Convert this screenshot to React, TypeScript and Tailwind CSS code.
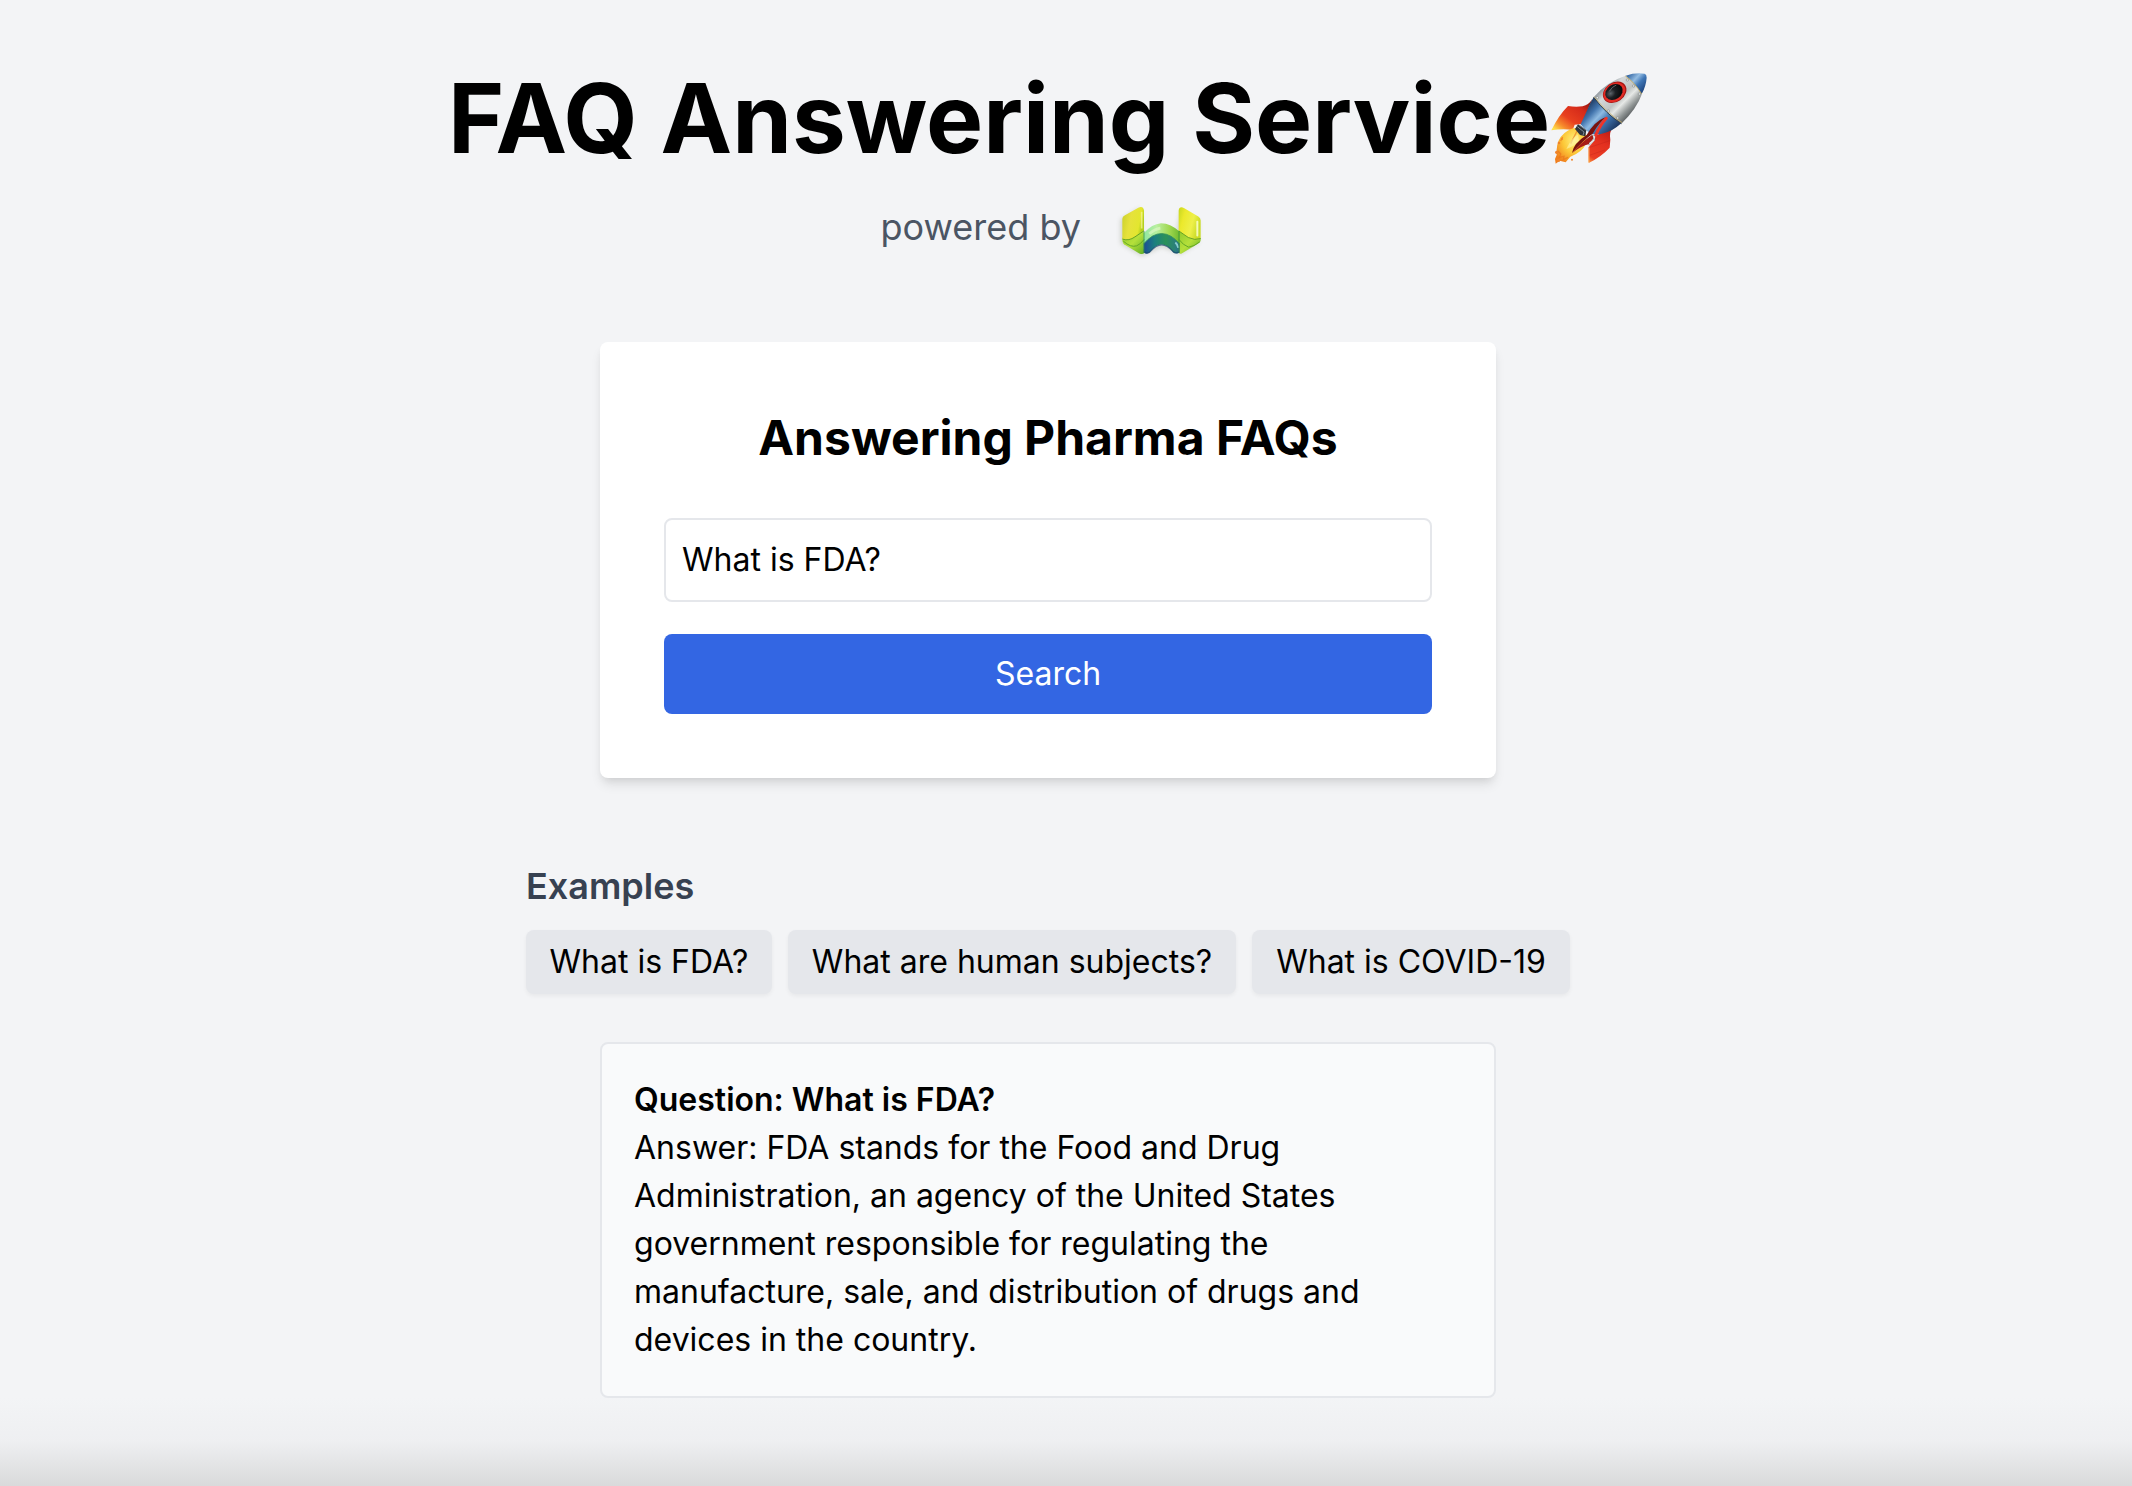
import React, { useState } from "react";

function Rocket() {
  return (
    <svg viewBox="30 30 294 288" className="h-24 w-[98px] shrink-0" aria-hidden="true">
      <defs>
        <linearGradient id="hull" gradientUnits="userSpaceOnUse" x1="185" y1="75" x2="280" y2="170">
          <stop offset="0" stopColor="#77808a" />
          <stop offset="0.22" stopColor="#d4d8d9" />
          <stop offset="0.5" stopColor="#c0c4c3" />
          <stop offset="0.62" stopColor="#e6e8e6" />
          <stop offset="0.8" stopColor="#8f9494" />
          <stop offset="1" stopColor="#404447" />
        </linearGradient>
        <linearGradient id="steel" gradientUnits="userSpaceOnUse" x1="135" y1="140" x2="215" y2="215">
          <stop offset="0" stopColor="#1f3a60" />
          <stop offset="0.25" stopColor="#4173ac" />
          <stop offset="0.45" stopColor="#8fbbe2" />
          <stop offset="0.65" stopColor="#4379b5" />
          <stop offset="1" stopColor="#1e3b66" />
        </linearGradient>
        <linearGradient id="nose" gradientUnits="userSpaceOnUse" x1="270" y1="40" x2="320" y2="85">
          <stop offset="0" stopColor="#386aa6" />
          <stop offset="0.35" stopColor="#93bce2" />
          <stop offset="0.6" stopColor="#3f76b6" />
          <stop offset="1" stopColor="#1c417a" />
        </linearGradient>
        <linearGradient id="finLeft" gradientUnits="userSpaceOnUse" x1="140" y1="120" x2="62" y2="222">
          <stop offset="0" stopColor="#8e130d" />
          <stop offset="0.25" stopColor="#d52a1a" />
          <stop offset="0.6" stopColor="#e8401f" />
          <stop offset="0.82" stopColor="#f78a2c" />
          <stop offset="1" stopColor="#ffe04a" />
        </linearGradient>
        <linearGradient id="finRight" gradientUnits="userSpaceOnUse" x1="205" y1="205" x2="150" y2="308">
          <stop offset="0" stopColor="#bb1c14" />
          <stop offset="0.4" stopColor="#e3301f" />
          <stop offset="0.85" stopColor="#ea3e25" />
          <stop offset="1" stopColor="#f9903a" />
        </linearGradient>
        <radialGradient id="flame" cx="0.6" cy="0.35" r="0.7">
          <stop offset="0" stopColor="#fff07a" />
          <stop offset="0.5" stopColor="#fcc838" />
          <stop offset="1" stopColor="#f07f1c" />
        </radialGradient>
        <radialGradient id="glass" cx="0.3" cy="0.45" r="0.7">
          <stop offset="0" stopColor="#5e656b" />
          <stop offset="0.4" stopColor="#1c2024" />
          <stop offset="1" stopColor="#050607" />
        </radialGradient>
      </defs>
      <path d="M157 117 Q146 135 128 139 Q106 142 84 138 Q56 166 34 211 Q70 205 98 210 L104 194 L126 192 Z" fill="url(#finLeft)" />
      <path d="M217 205 Q207 217 211 239 L209 263 Q184 290 146 309 L146 262 L163 242 L166 227 Z" fill="url(#finRight)" />
      <path d="M146 263 L210 242 M148 286 L194 270" stroke="#b5201a" strokeWidth="1.5" opacity="0.6" />
      <path d="M147 262 L147 307" stroke="#fba64a" strokeWidth="3" />
      <path d="M111 203 Q82 205 62 231 Q48 251 50 285 L45 297 L47 311 L59 302 L77 307 L91 290 Q126 278 139 250 L140 226 Z" fill="url(#flame)" />
      <path d="M54 273 L62 282 L58 292 L72 289 L70 299 L84 292 M68 231 L62 243 M111 213 L92 251" stroke="#e8701b" strokeWidth="4" fill="none" opacity="0.6" />
      <path d="M114 223 Q92 238 79 267 Q101 260 117 243" fill="#fff6ad" opacity="0.6" />
      <g fill="#f0832a">
        <circle cx="57" cy="249" r="4" />
        <circle cx="66" cy="237" r="3" />
        <circle cx="96" cy="299" r="3" />
        <circle cx="50" cy="277" r="5" />
        <circle cx="56" cy="301" r="5" />
      </g>
      <path d="M161 112 Q150 129 144 145 L122 193 Q143 222 168 224 Q190 223 215 211 Q232 201 244 190 Z" fill="url(#steel)" />
      <path d="M161 112 Q198 66 257 47 Q284 67 306 101 Q291 145 244 191 Q202 163 161 112 Z" fill="url(#hull)" />
      <path d="M257 47 Q286 37 314 41 Q320 43 320 53 Q318 79 305 102 Q286 70 257 47 Z" fill="url(#nose)" />
      <path d="M256 48 Q285 68 305 102" stroke="#c7aa55" strokeWidth="2.5" fill="none" />
      <path d="M161 112 Q199 162 244 191" stroke="#33404c" strokeWidth="3" fill="none" />
      <path d="M163 110 Q201 159 246 188" stroke="#cfb45c" strokeWidth="2" fill="none" />
      <g fill="#e9eceb" stroke="#6e7476" strokeWidth="1.5">
        <circle cx="172" cy="113" r="3.5" />
        <circle cx="205" cy="153" r="3.5" />
        <circle cx="233" cy="174" r="3.5" />
        <circle cx="262" cy="60" r="3.5" />
        <circle cx="281" cy="78" r="3.5" />
        <circle cx="298" cy="102" r="3.5" />
      </g>
      <ellipse cx="224" cy="97" rx="38" ry="29" transform="rotate(-35 224 97)" fill="#a61614" />
      <ellipse cx="223" cy="97" rx="35" ry="27" transform="rotate(-35 223 97)" fill="#e32b24" />
      <ellipse cx="222" cy="96" rx="28" ry="22" transform="rotate(-35 222 96)" fill="url(#glass)" />
      <path d="M208 94 Q216 80 229 75" stroke="#8d969b" strokeWidth="3" fill="none" opacity="0.6" />
      <path d="M114 193 L139 210 L136 229 L120 225 L105 207 Z" fill="#2e353c" />
      <path d="M112 200 L132 216 L129 226 M119 196 L138 210" stroke="#7d8993" strokeWidth="3" fill="none" />
      <path d="M199 172 Q179 185 158 221 Q126 244 96 279 Q101 249 140 225 Q163 185 191 174 Z" fill="#7a120d" />
      <path d="M199 175 Q181 194 167 226" stroke="#ee3528" strokeWidth="9" fill="none" strokeLinecap="round" />
      <path d="M96 280 Q119 250 157 224 L161 234 L148 252 Q123 257 96 280 Z" fill="#a81d14" />
      <path d="M147 256 L163 242 L166 230 L158 224 L161 238 L147 249 Z" fill="#f8f9fa" stroke="#4a4f54" strokeWidth="1" />
    </svg>
  );
}

function Logo() {
  return (
    <svg viewBox="50 30 270 170" className="mt-[3px] h-[57px] w-[90px] shrink-0 overflow-visible" aria-hidden="true">
      <defs>
        <linearGradient id="wingLeft" x1="0" y1="0" x2="1" y2="0.3">
          <stop offset="0" stopColor="#c9cf2a" />
          <stop offset="0.45" stopColor="#e6e23c" />
          <stop offset="0.85" stopColor="#e3e62f" />
          <stop offset="1" stopColor="#b4cf1e" />
        </linearGradient>
        <linearGradient id="wingRight" x1="0" y1="0" x2="1" y2="0.4">
          <stop offset="0" stopColor="#c5d620" />
          <stop offset="0.3" stopColor="#ece92c" />
          <stop offset="0.7" stopColor="#eef04a" />
          <stop offset="1" stopColor="#cbdc28" />
        </linearGradient>
        <linearGradient id="leaf" x1="0" y1="0" x2="1" y2="1">
          <stop offset="0" stopColor="#8fc92b" />
          <stop offset="0.5" stopColor="#b5e03b" />
          <stop offset="1" stopColor="#5fae25" />
        </linearGradient>
        <linearGradient id="archTop" gradientUnits="userSpaceOnUse" x1="130" y1="130" x2="240" y2="130">
          <stop offset="0" stopColor="#8fe6a0" />
          <stop offset="0.35" stopColor="#b9efa0" />
          <stop offset="0.7" stopColor="#a0d850" />
          <stop offset="1" stopColor="#6cb82c" />
        </linearGradient>
        <linearGradient id="archLow" gradientUnits="userSpaceOnUse" x1="130" y1="160" x2="240" y2="160">
          <stop offset="0" stopColor="#1c4a96" />
          <stop offset="0.3" stopColor="#1c7f80" />
          <stop offset="0.6" stopColor="#2a9159" />
          <stop offset="0.85" stopColor="#2a8079" />
          <stop offset="1" stopColor="#276a8e" />
        </linearGradient>
        <filter id="soft" x="-20%" y="-20%" width="140%" height="150%">
          <feGaussianBlur stdDeviation="7" />
        </filter>
        <filter id="edge" x="-50%" y="-50%" width="200%" height="200%" filterUnits="objectBoundingBox">
          <feGaussianBlur stdDeviation="2" />
        </filter>
      </defs>
      <path d="M60 84 L118 50 L128 130 L184 110 L228 120 L240 60 L296 90 L294 156 L240 190 L184 168 L125 196 L60 158 Z" fill="#8a917c" opacity="0.3" filter="url(#soft)" />
      <path d="M66 140 L125 118 L131 125 L132 185 Q128 191 117 187 L72 160 Q65 154 66 140 Z" fill="url(#leaf)" />
      <path d="M236 118 L301 141 Q303 151 294 157 L244 187 Q235 190 235 181 Z" fill="url(#leaf)" />
      <path d="M130 126 Q155 98 182 96 Q212 96 238 122 L238 175 Q184 120 130 175 Z" fill="url(#archTop)" />
      <path d="M130 158 Q156 127 184 127 Q213 128 238 158 L238 184 Q230 190 219 184 Q184 136 148 184 Q137 191 130 184 Z" fill="url(#archLow)" />
      <path d="M130 158 Q156 127 184 127 Q213 128 238 158" stroke="#35915a" strokeWidth="2.5" fill="none" />
      <path d="M133 183 Q145 189 151 180 Q184 142 217 180 Q226 189 236 182" stroke="#1b4471" strokeWidth="4" fill="none" opacity="0.7" />
      <path d="M225 154 Q232 160 234 170" stroke="#87cbd0" strokeWidth="6" fill="none" />
      <path d="M66 83 Q66 76 74 72 L114 50 Q128 43 131 58 L131 119 L103 138 Q84 150 66 143 Z" fill="url(#wingLeft)" />
      <path d="M235 58 Q237 43 252 51 L294 76 Q301 80 301 88 L301 142 Q283 150 260 137 L235 119 Z" fill="url(#wingRight)" />
      <path d="M67 144 Q86 150 104 137 L131 119 M235 119 Q252 131 264 139 Q284 149 301 142" stroke="#69a325" strokeWidth="3" fill="none" />
      <path d="M69 150 Q91 170 109 164 Q121 159 131 145 M236 145 Q248 162 265 168 Q281 166 298 152" stroke="#65a827" strokeWidth="3" fill="none" />
      <path d="M131 120 L131 185 M236 120 L236 185" stroke="#328f3e" strokeWidth="3" opacity="0.75" />
      <path d="M124 62 L124 112" stroke="#f9f99a" strokeWidth="5" opacity="0.7" />
      <path d="M291 92 L291 133" stroke="#fbffd0" strokeWidth="6" strokeLinecap="round" opacity="0.85" />
      <path d="M147 128 Q163 114 180 111" stroke="#ddf8c4" strokeWidth="8" fill="none" opacity="0.7" filter="url(#edge)" />
    </svg>
  );
}

const examples = [
  { text: "What is FDA?", width: "w-[246px]" },
  { text: "What are human subjects?", width: "w-[448px]" },
  { text: "What is COVID-19", width: "w-[318px]" },
];

export default function App() {
  const [query, setQuery] = useState("What is FDA?");

  return (
    <div className="flex h-[1486px] flex-col items-center overflow-hidden bg-[#f3f4f6] font-['Inter',sans-serif] text-[32px] leading-[48px] text-black">
      <div className="flex w-full flex-col items-center pt-[70px] pr-9">
        <h1 className="flex h-24 items-start text-8xl leading-none font-bold whitespace-nowrap">
          <span>FAQ Answering Service</span>
          <Rocket />
        </h1>

        <div className="mt-8 flex h-14 w-[335px] items-start justify-between pr-[9px] text-4xl leading-[58px] text-[#4b5563]">
          <span className="whitespace-nowrap">powered by</span>
          <Logo />
        </div>

        <form
          className="mt-[88px] flex w-4xl flex-col rounded-lg bg-white p-16 shadow-[0_8px_12px_-2px_rgba(0,0,0,0.1),0_4px_8px_-4px_rgba(0,0,0,0.1)]"
          onSubmit={(e) => e.preventDefault()}
        >
          <h2 className="text-center text-5xl leading-[64px] font-bold">Answering Pharma FAQs</h2>
          <input
            value={query}
            onChange={(e) => setQuery(e.target.value)}
            className="mt-12 h-[84px] rounded-lg border-2 border-[#e5e7eb] bg-white px-4 pt-[15px] pb-[17px] outline-none"
          />
          <button type="submit" className="mt-8 h-20 rounded-lg bg-[#3366e3] text-white">
            Search
          </button>
        </form>

        <section className="mt-20 w-[1044px]">
          <h3 className="text-4xl leading-[56px] font-semibold text-[#374151]">Examples</h3>
          <div className="mt-4 flex gap-4">
            {examples.map((example) => (
              <button
                key={example.text}
                onClick={() => setQuery(example.text)}
                className={`${example.width} h-16 rounded-lg bg-[#e5e7eb] whitespace-nowrap shadow-[0_2px_4px_rgba(0,0,0,0.05)]`}
              >
                {example.text}
              </button>
            ))}
          </div>
        </section>

        <article className="mt-12 w-4xl rounded-lg border-2 border-[#e5e7eb] bg-[#f9fafb] p-8">
          <p className="font-semibold">Question: What is FDA?</p>
          <p>
            Answer: FDA stands for the Food and Drug Administration, an agency of the United States government
            responsible for regulating the manufacture, sale, and distribution of drugs and devices in the country.
          </p>
        </article>
      </div>

      <div className="h-[88px] w-full bg-linear-to-b from-[#f3f4f6] via-[#eeeff1] to-[#d9dadb]" />
    </div>
  );
}
